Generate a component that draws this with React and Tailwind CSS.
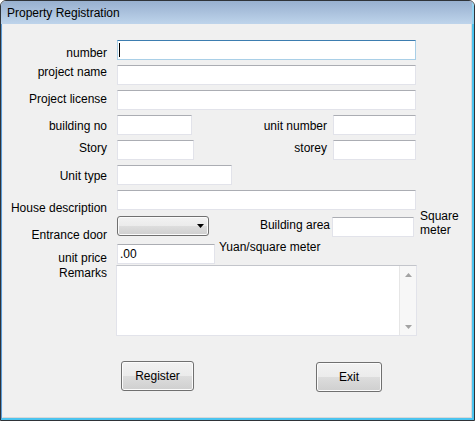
const field = "h-5 shrink-0 border border-[#e2e3ea] border-t-[#abadb3] bg-white";
const winBtn =
  "flex h-[30px] shrink-0 items-center justify-center rounded-[3px] border border-[#707070] bg-[linear-gradient(#f2f2f2_0%,#ebebeb_50%,#dddddd_50%,#cfcfcf_100%)] shadow-[inset_0_0_0_1px_#fbfbfb]";

function Label({ children, className = "" }) {
  return (
    <div className={`w-[104px] shrink-0 text-right leading-4 ${className}`}>
      {children}
    </div>
  );
}

function Row({ children, className = "" }) {
  return <div className={`flex h-5 items-start ${className}`}>{children}</div>;
}

function Arrow({ up, className = "" }) {
  return (
    <svg width="7" height="4" viewBox="0 0 7 4" className={className}>
      <path d={up ? "M0 4 L3.5 0 L7 4 Z" : "M0 0 L7 0 L3.5 4 Z"} fill="currentColor" />
    </svg>
  );
}

export default function App() {
  return (
    <div className="h-[421px] w-[475px] bg-white font-['Liberation_Sans',Arial,sans-serif] text-[12px] text-black">
      <div className="flex h-full flex-col overflow-hidden rounded-t-[6px] border border-[#2f3338]">
        {/* title bar */}
        <div className="flex h-[23px] shrink-0 items-start border-r-2 border-[#8fd3f2] bg-gradient-to-b from-[#98b0cf] to-[#bed4eb] pl-[6px] pt-[4px] leading-4">
          Property Registration
        </div>

        <div className="flex flex-1 border-b-2 border-l border-r-2 border-b-[#4cc4ef] border-l-[#5b9bd5] border-r-[#4cc4ef]">
          <div className="flex flex-1 flex-col border-b border-l border-r border-b-[#d8d8d8] border-l-[#e6edf5] border-r-[#d8d8d8] bg-[#f0f0f0] pt-[16px]">
            <Row>
              <Label className="pt-[5px]">number</Label>
              <div className="ml-[10px] flex h-5 w-[299px] shrink-0 items-center border border-[#a9cfe7] border-t-[#3d7db0] bg-white pl-px">
                <div className="h-[14px] w-px bg-black" />
              </div>
            </Row>

            <Row className="mt-[5px]">
              <Label className="-mt-px">project name</Label>
              <div className={`${field} ml-[10px] w-[299px]`} />
            </Row>

            <Row className="mt-[5px]">
              <Label className="pt-px">Project license</Label>
              <div className={`${field} ml-[10px] w-[299px]`} />
            </Row>

            <Row className="mt-[5px]">
              <Label className="pt-[3px]">building no</Label>
              <div className={`${field} ml-[10px] w-[75px]`} />
              <div className="w-[135px] shrink-0 pt-[3px] text-right leading-4">unit number</div>
              <div className={`${field} ml-[6px] w-[83px]`} />
            </Row>

            <Row className="mt-[5px]">
              <Label>Story</Label>
              <div className={`${field} ml-[10px] w-[77px]`} />
              <div className="w-[133px] shrink-0 text-right leading-4">storey</div>
              <div className={`${field} ml-[6px] w-[83px]`} />
            </Row>

            <Row className="mt-[5px]">
              <Label className="pt-[3px]">Unit type</Label>
              <div className={`${field} ml-[10px] w-[115px]`} />
            </Row>

            <Row className="mt-[5px]">
              <Label className="pt-[10px]">House description</Label>
              <div className={`${field} ml-[10px] w-[299px]`} />
            </Row>

            <Row className="mt-[5px]">
              <Label className="pt-[12px]">Entrance door</Label>
              <div className="ml-[10px] mt-px flex h-5 w-[92px] shrink-0 items-center justify-end rounded-[3px] border border-[#707070] bg-[linear-gradient(#f2f2f2_0%,#ebebeb_50%,#dddddd_50%,#cfcfcf_100%)] pr-[4px] shadow-[inset_0_0_0_1px_#fbfbfb]">
                <Arrow className="text-black" />
              </div>
              <div className="w-[121px] shrink-0 pt-[2px] text-right leading-4">Building area</div>
              <div className={`${field} ml-[2px] mt-[2px] w-[82px]`} />
              <div className="-mt-[6px] ml-[6px] leading-[14px]">
                Square
                <br />
                meter
              </div>
            </Row>

            <Row className="mt-[9px]">
              <Label className="pt-[6px]">unit price</Label>
              <div className={`${field} ml-[10px] flex w-[98px] items-center pl-[2px] leading-4`}>.00</div>
              <div className="-mt-[5px] ml-[4px] leading-4">Yuan/square meter</div>
            </Row>

            <div className="mt-px flex items-start">
              <Label>Remarks</Label>
              <div className="ml-[9px] flex h-[71px] w-[301px] shrink-0 justify-end border border-[#e2e3ea] border-t-[#c3c5cb] bg-white">
                <div className="flex w-[17px] flex-col justify-between border-l border-[#e6e6e6] bg-[#f7f7f7] text-[#a3a3a3]">
                  <div className="flex h-[17px] items-center justify-center">
                    <Arrow up />
                  </div>
                  <div className="flex h-[17px] items-center justify-center">
                    <Arrow />
                  </div>
                </div>
              </div>
            </div>

            <div className="mt-[25px] flex items-start">
              <button className={`${winBtn} ml-[118px] w-[73px]`}>Register</button>
              <button className={`${winBtn} ml-[122px] mt-px w-[66px]`}>Exit</button>
            </div>
          </div>
        </div>
      </div>
    </div>
  );
}
